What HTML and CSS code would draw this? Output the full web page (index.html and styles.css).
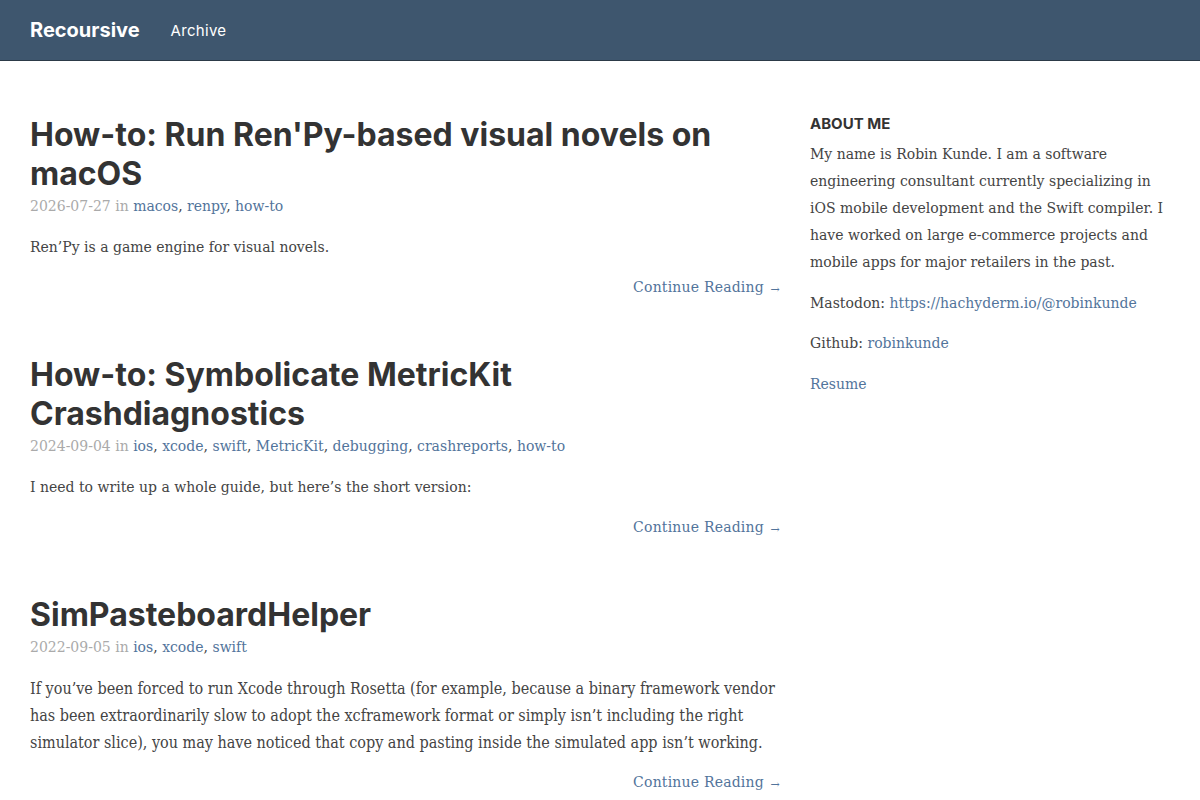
FILE: index.html
```html
<!DOCTYPE html>
<html lang="en">
<head>
    <meta charset="UTF-8">
    <title>Recoursive</title>
    <link rel="stylesheet" href="styles.css">
</head>
<body>
<header class="site-header">
    <a class="brand" href="#">Recoursive</a>
    <a class="nav-link" href="#">Archive</a>
</header>

<div class="page">
    <main class="posts">
        <article class="post">
            <h1 class="post-title">How-to: Run Ren'Py-based visual novels on macOS</h1>
            <p class="post-meta"><span class="date">2026-07-27 in</span> <a href="#">macos</a>, <a href="#">renpy</a>, <a href="#">how-to</a></p>
            <p class="excerpt">Ren’Py is a game engine for visual novels.</p>
            <p class="more"><a href="#">Continue Reading <span class="arrow">→</span></a></p>
        </article>

        <article class="post">
            <h1 class="post-title">How-to: Symbolicate MetricKit Crashdiagnostics</h1>
            <p class="post-meta"><span class="date">2024-09-04 in</span> <a href="#">ios</a>, <a href="#">xcode</a>, <a href="#">swift</a>, <a href="#">MetricKit</a>, <a href="#">debugging</a>, <a href="#">crashreports</a>, <a href="#">how-to</a></p>
            <p class="excerpt">I need to write up a whole guide, but here’s the short version:</p>
            <p class="more"><a href="#">Continue Reading <span class="arrow">→</span></a></p>
        </article>

        <article class="post">
            <h1 class="post-title">SimPasteboardHelper</h1>
            <p class="post-meta"><span class="date">2022-09-05 in</span> <a href="#">ios</a>, <a href="#">xcode</a>, <a href="#">swift</a></p>
            <p class="excerpt condensed">If you’ve been forced to run Xcode through Rosetta (for example, because a binary framework vendor has been extraordinarily slow to adopt the xcframework format or simply isn’t including the right simulator slice), you may have noticed that copy and pasting inside the simulated app isn’t working.</p>
            <p class="more"><a href="#">Continue Reading <span class="arrow">→</span></a></p>
        </article>
    </main>

    <aside class="sidebar">
        <h2>About me</h2>
        <p>My name is Robin Kunde. I am a software engineering consultant currently specializing in iOS mobile development and the Swift compiler. I have worked on large e-commerce projects and mobile apps for major retailers in the past.</p>
        <p>Mastodon: <a href="#">https://hachyderm.io/@robinkunde</a></p>
        <p>Github: <a href="#">robinkunde</a></p>
        <p><a href="#">Resume</a></p>
    </aside>
</div>
</body>
</html>
```

FILE: styles.css
```css
body {
    margin: 0;
    font-family: "DejaVu Serif", "Liberation Serif", serif;
    font-size: 14px;
    line-height: 27px;
    color: #444;
    background-color: #fff;
}
a {
    color: #52749b;
    text-decoration: none;
}
.site-header {
    height: 60px;
    background-color: #3e566e;
    border-bottom: 1px solid #2c3a48;
    display: flex;
    align-items: center;
    padding: 0 30px;
    font-family: "Inter", "Open Sans", sans-serif;
}
.brand {
    color: #fff;
    font-size: 20px;
    font-weight: 700;
    margin-right: 31px;
}
.nav-link {
    color: #fff;
    font-size: 15px;
    font-weight: 400;
    letter-spacing: 0.3px;
}
.page {
    display: grid;
    grid-template-columns: 750px 360px;
    column-gap: 30px;
    padding: 54px 30px 0;
}
.post {
    margin-bottom: 53px;
}
.post-title {
    font-family: "Inter", "Open Sans", sans-serif;
    font-size: 32px;
    line-height: 39px;
    font-weight: 700;
    color: #333;
    margin: 0;
}
.post-meta {
    margin: 0;
}
.date {
    color: #aaa;
}
.excerpt {
    margin: 14px 0 0;
}
.condensed {
    font-family: "DejaVu Serif Condensed", "DejaVu Serif", serif;
    font-stretch: condensed;
    font-size: 16px;
}
.more {
    margin: 13px 0 0;
    text-align: right;
    letter-spacing: 0.2px;
}
.arrow {
    font-size: 11px;
    margin-left: 2px;
    position: relative;
    top: 1px;
}
.sidebar h2 {
    font-family: "Inter", "Open Sans", sans-serif;
    font-size: 15px;
    line-height: 18px;
    font-weight: 700;
    text-transform: uppercase;
    color: #333;
    margin: 0 0 8px;
}
.sidebar p {
    margin: 0 0 13.5px;
}
```
